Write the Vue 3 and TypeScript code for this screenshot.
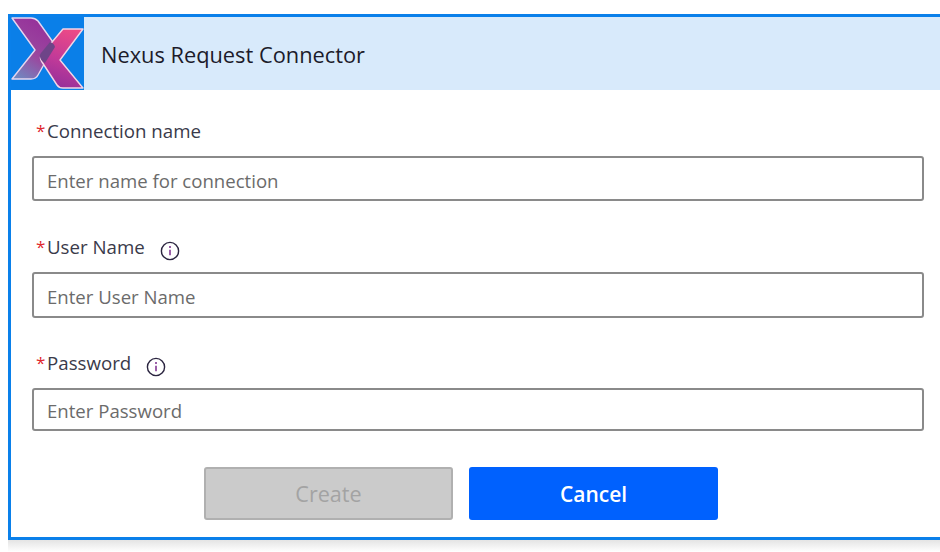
<script setup lang="ts">
interface Field {
  label: string
  placeholder: string
  info: boolean
  labelClass: string
  inputClass: string
}

const fields: Field[] = [
  { label: 'Connection name', placeholder: 'Enter name for connection', info: false, labelClass: 'l1', inputClass: 'i1' },
  { label: 'User Name', placeholder: 'Enter User Name', info: true, labelClass: 'l2', inputClass: 'i2' },
  { label: 'Password', placeholder: 'Enter Password', info: true, labelClass: 'l3', inputClass: 'i3' },
]
</script>

<template>
  <div class="page">
    <div class="dialog">
      <header class="head">
        <div class="logo">
          <svg width="73" height="73" viewBox="0 0 73 73">
            <defs>
              <linearGradient id="g1" x1="0.6" y1="0" x2="0.15" y2="1">
                <stop offset="0" stop-color="#96309a" />
                <stop offset="0.55" stop-color="#9a489f" />
                <stop offset="1" stop-color="#7088c0" />
              </linearGradient>
              <linearGradient id="g2" x1="0.75" y1="0" x2="0.5" y2="1">
                <stop offset="0" stop-color="#ee4a86" />
                <stop offset="0.55" stop-color="#c23a98" />
                <stop offset="1" stop-color="#96309a" />
              </linearGradient>
            </defs>
            <path d="M1 1 H20 Q24 1 27 4 L44 28 L27 58 Q25 62 20 62 H1 L24 33 Z" fill="url(#g1)" stroke="#e6d6ef" stroke-width="1.4" stroke-linejoin="round" />
            <path d="M72 12 H52 L31 37 Q28 41 31 45 L46 68 Q48 71 52 71 H72 L49 43 Z" fill="url(#g2)" stroke="#f2d6e6" stroke-width="1.4" stroke-linejoin="round" />
            <path d="M39 25 Q43 26 44 30 L34 46 Q30 44 29 40 Q28 38 30 36 Z" fill="#6e4488" />
          </svg>
        </div>
        <h1 class="title">Nexus Request Connector</h1>
      </header>
      <form class="body" @submit.prevent>
        <div v-for="f in fields" :key="f.label" class="field">
          <div class="label" :class="f.labelClass">
            <span class="star">*</span>
            <span class="text">{{ f.label }}</span>
            <svg v-if="f.info" class="info" width="20" height="20" viewBox="0 0 20 20">
              <circle cx="10" cy="10" r="8.6" fill="none" stroke="#2b2540" stroke-width="1.4" />
              <circle cx="10" cy="6" r="1" fill="#7a2a8c" />
              <path d="M10 8.8 V14.2" stroke="#7a2a8c" stroke-width="1.5" />
            </svg>
          </div>
          <input class="input" :class="f.inputClass" type="text" :placeholder="f.placeholder" />
        </div>
        <div class="actions">
          <button class="btn create" type="button" disabled>Create</button>
          <button class="btn cancel" type="button">Cancel</button>
        </div>
      </form>
    </div>
    <div class="shade"></div>
  </div>
</template>

<style scoped>
.page {
  width: 940px;
  height: 552px;
  overflow: hidden;
  background: #fff;
  padding-top: 14px;
  padding-left: 8px;
  box-sizing: border-box;
  font-family: "Open Sans", "Noto Sans", sans-serif;
}
.dialog {
  width: 932px;
  height: 526px;
  box-sizing: border-box;
  border: 3px solid #0a80ea;
  border-right: none;
  background: #fff;
  display: flex;
  flex-direction: column;
}
.shade {
  height: 12px;
  background: linear-gradient(#e4e4e4, #fff);
}
.head {
  height: 73px;
  display: flex;
  align-items: center;
  background: #d8eafb;
  flex: none;
}
.logo {
  width: 73px;
  height: 73px;
  background: #0a7fe8;
  flex: none;
  overflow: hidden;
}
.logo svg {
  display: block;
}
.title {
  margin: 2px 0 0 17px;
  font-size: 21.8px;
  font-weight: 400;
  color: #1c1b2a;
}
.body {
  flex: 1;
  padding: 0 16px 0 21px;
  display: flex;
  flex-direction: column;
}
.label {
  display: flex;
  align-items: center;
  height: 28px;
  padding-left: 4px;
  font-size: 18.7px;
  color: #3a3a4a;
}
.l1 { margin-top: 26px; margin-bottom: 12px; }
.l2 { margin-top: 31px; margin-bottom: 12px; }
.l3 { margin-top: 30px; margin-bottom: 12px; }
.star {
  color: #e0272d;
  width: 11px;
  font-size: 17px;
  flex: none;
}
.info {
  margin-left: 15px;
  margin-top: 9px;
}
.l3 .info {
  margin-left: 15px;
  margin-top: 10px;
}
.input {
  display: block;
  width: 100%;
  box-sizing: border-box;
  border: 2px solid #8a8a8a;
  border-radius: 3px;
  padding: 2px 13px 0;
  font: inherit;
  font-size: 18.6px;
  outline: none;
  background: #fff;
}
.input::placeholder {
  color: #6b6b6b;
  opacity: 1;
}
.i1 { height: 45px; padding-top: 4px; }
.i2 { height: 46px; }
.i3 { height: 43px; }
.actions {
  margin-top: 36px;
  display: flex;
  gap: 16px;
  padding-left: 172px;
}
.btn {
  width: 249px;
  height: 53px;
  box-sizing: border-box;
  border-radius: 3px;
  font: inherit;
  font-size: 21px;
}
.create {
  background: #cbcbcb;
  border: 2px solid #b0b0b0;
  color: #a3a3a3;
  font-size: 21.6px;
}
.cancel {
  background: #0061fe;
  border: none;
  color: #fff;
  font-weight: 600;
}
</style>
